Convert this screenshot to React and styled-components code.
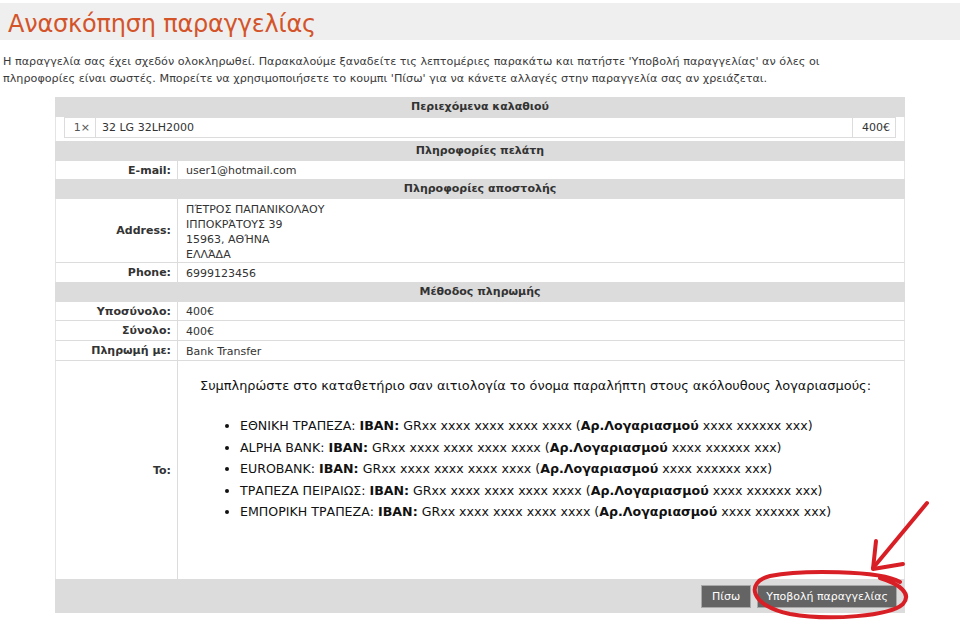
import React from "react";
import styled, { createGlobalStyle } from "styled-components";

const Global = createGlobalStyle`
  html, body { margin: 0; padding: 0; background: #fff; }
  body { font-family: "DejaVu Sans", Verdana, sans-serif; color: #333; }
`;

const Page = styled.div`
  position: relative;
  width: 960px;
  height: 624px;
  overflow: hidden;
  padding-top: 3px;
  box-sizing: border-box;
`;

const TitleBar = styled.div`
  background: #efefef;
  height: 37px;
  padding-left: 8px;
`;

const Title = styled.h1`
  margin: 0;
  font-family: "DejaVu Sans", Verdana, sans-serif;
  font-weight: normal;
  font-size: 24px;
  line-height: 42px;
  height: 37px;
  color: #d4542a;
  letter-spacing: -0.2px;
`;

const Intro = styled.p`
  margin: 13px 0 0 3px;
  width: 845px;
  font-size: 11.2px;
  line-height: 17px;
  color: #3a3a3a;
`;

const Table = styled.div`
  margin: 10px 0 0 55px;
  width: 850px;
  font-size: 11px;
`;

const SectionHeader = styled.div`
  background: #dcdcdc;
  height: 20px;
  line-height: 20px;
  text-align: center;
  font-weight: bold;
  color: #333;
`;

const CartArea = styled.div`
  padding: 0 8px 3px;
  border-left: 1px solid #e4e4e4;
  border-right: 1px solid #e4e4e4;
`;

const CartRow = styled.div`
  display: grid;
  grid-template-columns: 30px 1fr 43px;
  border: 1px solid #dcdcdc;
  height: 19px;
`;

const CartCell = styled.div`
  line-height: 19px;
  padding: 0 ${(p) => (p.$right ? "5px" : "6px")};
  text-align: ${(p) => (p.$right ? "right" : "left")};
  border-left: ${(p) => (p.$first ? "none" : "1px solid #dcdcdc")};
  color: ${(p) => (p.$muted ? "#555" : "#333")};
`;

const Row = styled.div`
  display: grid;
  grid-template-columns: 122px 1fr;
  border-left: 1px solid #e4e4e4;
  border-right: 1px solid #e4e4e4;
  border-bottom: ${(p) => (p.$last ? "none" : "1px solid #dcdcdc")};
  min-height: ${(p) => p.$h || 18}px;
`;

const Label = styled.div`
  font-weight: bold;
  text-align: right;
  padding-right: 6px;
  display: flex;
  align-items: center;
  justify-content: flex-end;
  border-right: 1px solid #dcdcdc;
  color: #333;
`;

const Value = styled.div`
  padding: ${(p) => (p.$tall ? "3px" : "1px")} 8px 0;
  line-height: 15px;
  display: flex;
  flex-direction: column;
  justify-content: ${(p) => (p.$tall ? "flex-start" : "center")};
  color: #333;
`;

const BankBox = styled.div`
  padding: 10px 0 0 22px;
  font-size: 12.9px;
  color: #111;
`;

const BankIntro = styled.p`
  margin: 4px 0 0;
  line-height: 22px;
`;

const BankList = styled.ul`
  margin: 18px 0 0;
  padding-left: 40px;
  font-size: 12.6px;
  line-height: 21.5px;
`;

const Footer = styled.div`
  background: #dcdcdc;
  height: 34px;
  display: flex;
  align-items: center;
  justify-content: flex-end;
  gap: 6px;
  padding-right: 8px;
`;

const Button = styled.button`
  font-family: "DejaVu Sans", Verdana, sans-serif;
  font-size: 11px;
  color: #fff;
  background: #646464;
  border: 1px solid #a9a9a9;
  height: 23px;
  padding: 0 ${(p) => p.$pad || 10}px;
  margin-top: 1px;
  cursor: pointer;
`;

const Overlay = styled.svg`
  position: absolute;
  left: 0;
  top: 0;
  pointer-events: none;
`;

const banks = [
  "ΕΘΝΙΚΗ ΤΡΑΠΕΖΑ",
  "ALPHA BANK",
  "EUROBANK",
  "ΤΡΑΠΕΖΑ ΠΕΙΡΑΙΩΣ",
  "ΕΜΠΟΡΙΚΗ ΤΡΑΠΕΖΑ",
];

export default function App() {
  return (
    <>
      <Global />
      <Page>
        <TitleBar>
          <Title>Ανασκόπηση παραγγελίας</Title>
        </TitleBar>
        <Intro>
          Η παραγγελία σας έχει σχεδόν ολοκληρωθεί. Παρακαλούμε ξαναδείτε τις λεπτομέριες παρακάτω και πατήστε 'Υποβολή παραγγελίας' αν όλες οι πληροφορίες είναι σωστές. Μπορείτε να χρησιμοποιήσετε το κουμπι 'Πίσω' για να κάνετε αλλαγές στην παραγγελία σας αν χρειάζεται.
        </Intro>
        <Table>
          <SectionHeader>Περιεχόμενα καλαθιού</SectionHeader>
          <CartArea>
            <CartRow>
              <CartCell $first $right $muted>1×</CartCell>
              <CartCell>32 LG 32LH2000</CartCell>
              <CartCell $right>400€</CartCell>
            </CartRow>
          </CartArea>
          <SectionHeader>Πληροφορίες πελάτη</SectionHeader>
          <Row $h={18} $last>
            <Label>E-mail:</Label>
            <Value>user1@hotmail.com</Value>
          </Row>
          <SectionHeader>Πληροφορίες αποστολής</SectionHeader>
          <Row $h={63}>
            <Label>Address:</Label>
            <Value $tall>
              <span>ΠΈΤΡΟΣ ΠΑΠΑΝΙΚΟΛΆΟΥ</span>
              <span>ΙΠΠΟΚΡΆΤΟΥΣ 39</span>
              <span>15963, ΑΘΉΝΑ</span>
              <span>ΕΛΛΆΔΑ</span>
            </Value>
          </Row>
          <Row $h={19} $last>
            <Label>Phone:</Label>
            <Value>6999123456</Value>
          </Row>
          <SectionHeader>Μέθοδος πληρωμής</SectionHeader>
          <Row $h={18}>
            <Label>Υποσύνολο:</Label>
            <Value>400€</Value>
          </Row>
          <Row $h={19}>
            <Label>Σύνολο:</Label>
            <Value>400€</Value>
          </Row>
          <Row $h={19}>
            <Label>Πληρωμή με:</Label>
            <Value>Bank Transfer</Value>
          </Row>
          <Row $h={218} $last>
            <Label>To:</Label>
            <BankBox>
              <BankIntro>
                Συμπληρώστε στο καταθετήριο σαν αιτιολογία το όνομα παραλήπτη στους ακόλουθους λογαριασμούς:
              </BankIntro>
              <BankList>
                {banks.map((b) => (
                  <li key={b}>
                    {b}: <b>IBAN:</b> GRxx xxxx xxxx xxxx xxxx (<b>Αρ.Λογαριασμού</b> xxxx xxxxxx xxx)
                  </li>
                ))}
              </BankList>
            </BankBox>
          </Row>
          <Footer>
            <Button $pad={10}>Πίσω</Button>
            <Button $pad={8}>Υποβολή παραγγελίας</Button>
          </Footer>
        </Table>
        <Overlay width="960" height="624" viewBox="0 0 960 624">
          <g fill="none" stroke="#d91f26" strokeWidth="4" strokeLinecap="round" strokeLinejoin="round">
            <path d="M900 582 C 880 570, 800 570, 770 576 C 745 582, 750 606, 790 614 C 830 621, 890 616, 903 604 C 912 594, 900 584, 880 578" />
            <path d="M927 503 L 873 568" />
            <path d="M876 541 L 873 569 L 903 564" />
          </g>
        </Overlay>
      </Page>
    </>
  );
}
